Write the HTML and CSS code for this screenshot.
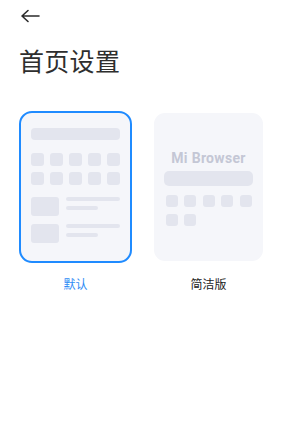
FILE: index.html
```html
<!DOCTYPE html>
<html lang="zh">
<head>
    <meta charset="UTF-8">
    <meta name="viewport" content="width=device-width, initial-scale=1.0">
    <title>首页设置</title>
    <link rel="stylesheet" href="styles.css">
</head>
<body>
    <div class="topbar">
        <svg class="back" width="20" height="14" viewBox="0 0 20 14">
            <path d="M19 7H2.5M8 1.5L2 7l6 5.5" fill="none" stroke="#2b2b2b" stroke-width="1.6" stroke-linecap="round" stroke-linejoin="round"/>
        </svg>
    </div>

    <h1>首页设置</h1>

    <div class="options">
        <div class="option">
            <div class="card selected">
                <div class="bar"></div>
                <div class="grid">
                    <span></span><span></span><span></span><span></span><span></span>
                    <span></span><span></span><span></span><span></span><span></span>
                </div>
                <div class="item">
                    <div class="thumb"></div>
                    <div class="lines">
                        <div class="line"></div>
                        <div class="line short"></div>
                    </div>
                </div>
                <div class="item">
                    <div class="thumb"></div>
                    <div class="lines">
                        <div class="line"></div>
                        <div class="line short"></div>
                    </div>
                </div>
            </div>
            <div class="label active">默认</div>
        </div>

        <div class="option">
            <div class="card simple">
                <div class="brand">Mi Browser</div>
                <div class="search"></div>
                <div class="grid small">
                    <span></span><span></span><span></span><span></span><span></span>
                    <span></span><span></span>
                </div>
            </div>
            <div class="label">简洁版</div>
        </div>
    </div>
</body>
</html>
```

FILE: styles.css
```css
body {
    margin: 0;
    background: #fff;
    font-family: "Noto Sans CJK SC", "Noto Sans", sans-serif;
    color: #2b2b2b;
}
.topbar {
    height: 32px;
    padding: 9px 0 0 20px;
    box-sizing: border-box;
}
.back {
    display: block;
}
h1 {
    margin: 10px 0 0 19px;
    font-size: 25px;
    font-weight: 400;
    line-height: 36px;
    letter-spacing: 0.3px;
    color: #2e2e2e;
}
.options {
    display: flex;
    gap: 20px;
    padding-left: 19px;
    margin-top: 33px;
}
.option {
    display: flex;
    flex-direction: column;
    align-items: center;
}
.card {
    width: 113px;
    height: 152px;
    box-sizing: border-box;
    border: 2px solid transparent;
    border-radius: 13px;
    background: #f5f6fa;
    background-clip: padding-box;
    padding: 15px 10px 0;
}
.card.selected {
    border-color: #1f8bff;
    background-clip: border-box;
}
.bar {
    height: 12px;
    border-radius: 4px;
    background: #e3e5ee;
}
.grid {
    display: grid;
    grid-template-columns: repeat(5, 13px);
    gap: 6px 6px;
    margin-top: 13px;
}
.grid span {
    height: 13px;
    border-radius: 3px;
    background: #e3e5ee;
}
.item {
    display: flex;
    gap: 7px;
    margin-top: 12px;
}
.item + .item {
    margin-top: 8px;
}
.thumb {
    width: 28px;
    height: 19px;
    border-radius: 3px;
    background: #e3e5ee;
}
.lines {
    flex: 1;
}
.line {
    height: 4px;
    border-radius: 2px;
    background: #e3e5ee;
}
.line.short {
    width: 32px;
    margin-top: 5px;
}
.brand {
    margin-top: 21px;
    text-align: center;
    font-family: Roboto, sans-serif;
    font-weight: 700;
    font-size: 14px;
    line-height: 18px;
    color: #c4c7d5;
    letter-spacing: 0.3px;
}
.search {
    height: 15px;
    margin-top: 4px;
    border-radius: 5px;
    background: #e3e5ee;
}
.grid.small {
    grid-template-columns: repeat(5, 12px);
    gap: 7px 6.5px;
    margin-top: 9px;
    padding-left: 1.5px;
}
.grid.small span {
    height: 12px;
}
.label {
    margin-top: 13px;
    font-size: 12px;
    line-height: 16px;
    color: #222;
}
.label.active {
    color: #2f8cf5;
}
```
